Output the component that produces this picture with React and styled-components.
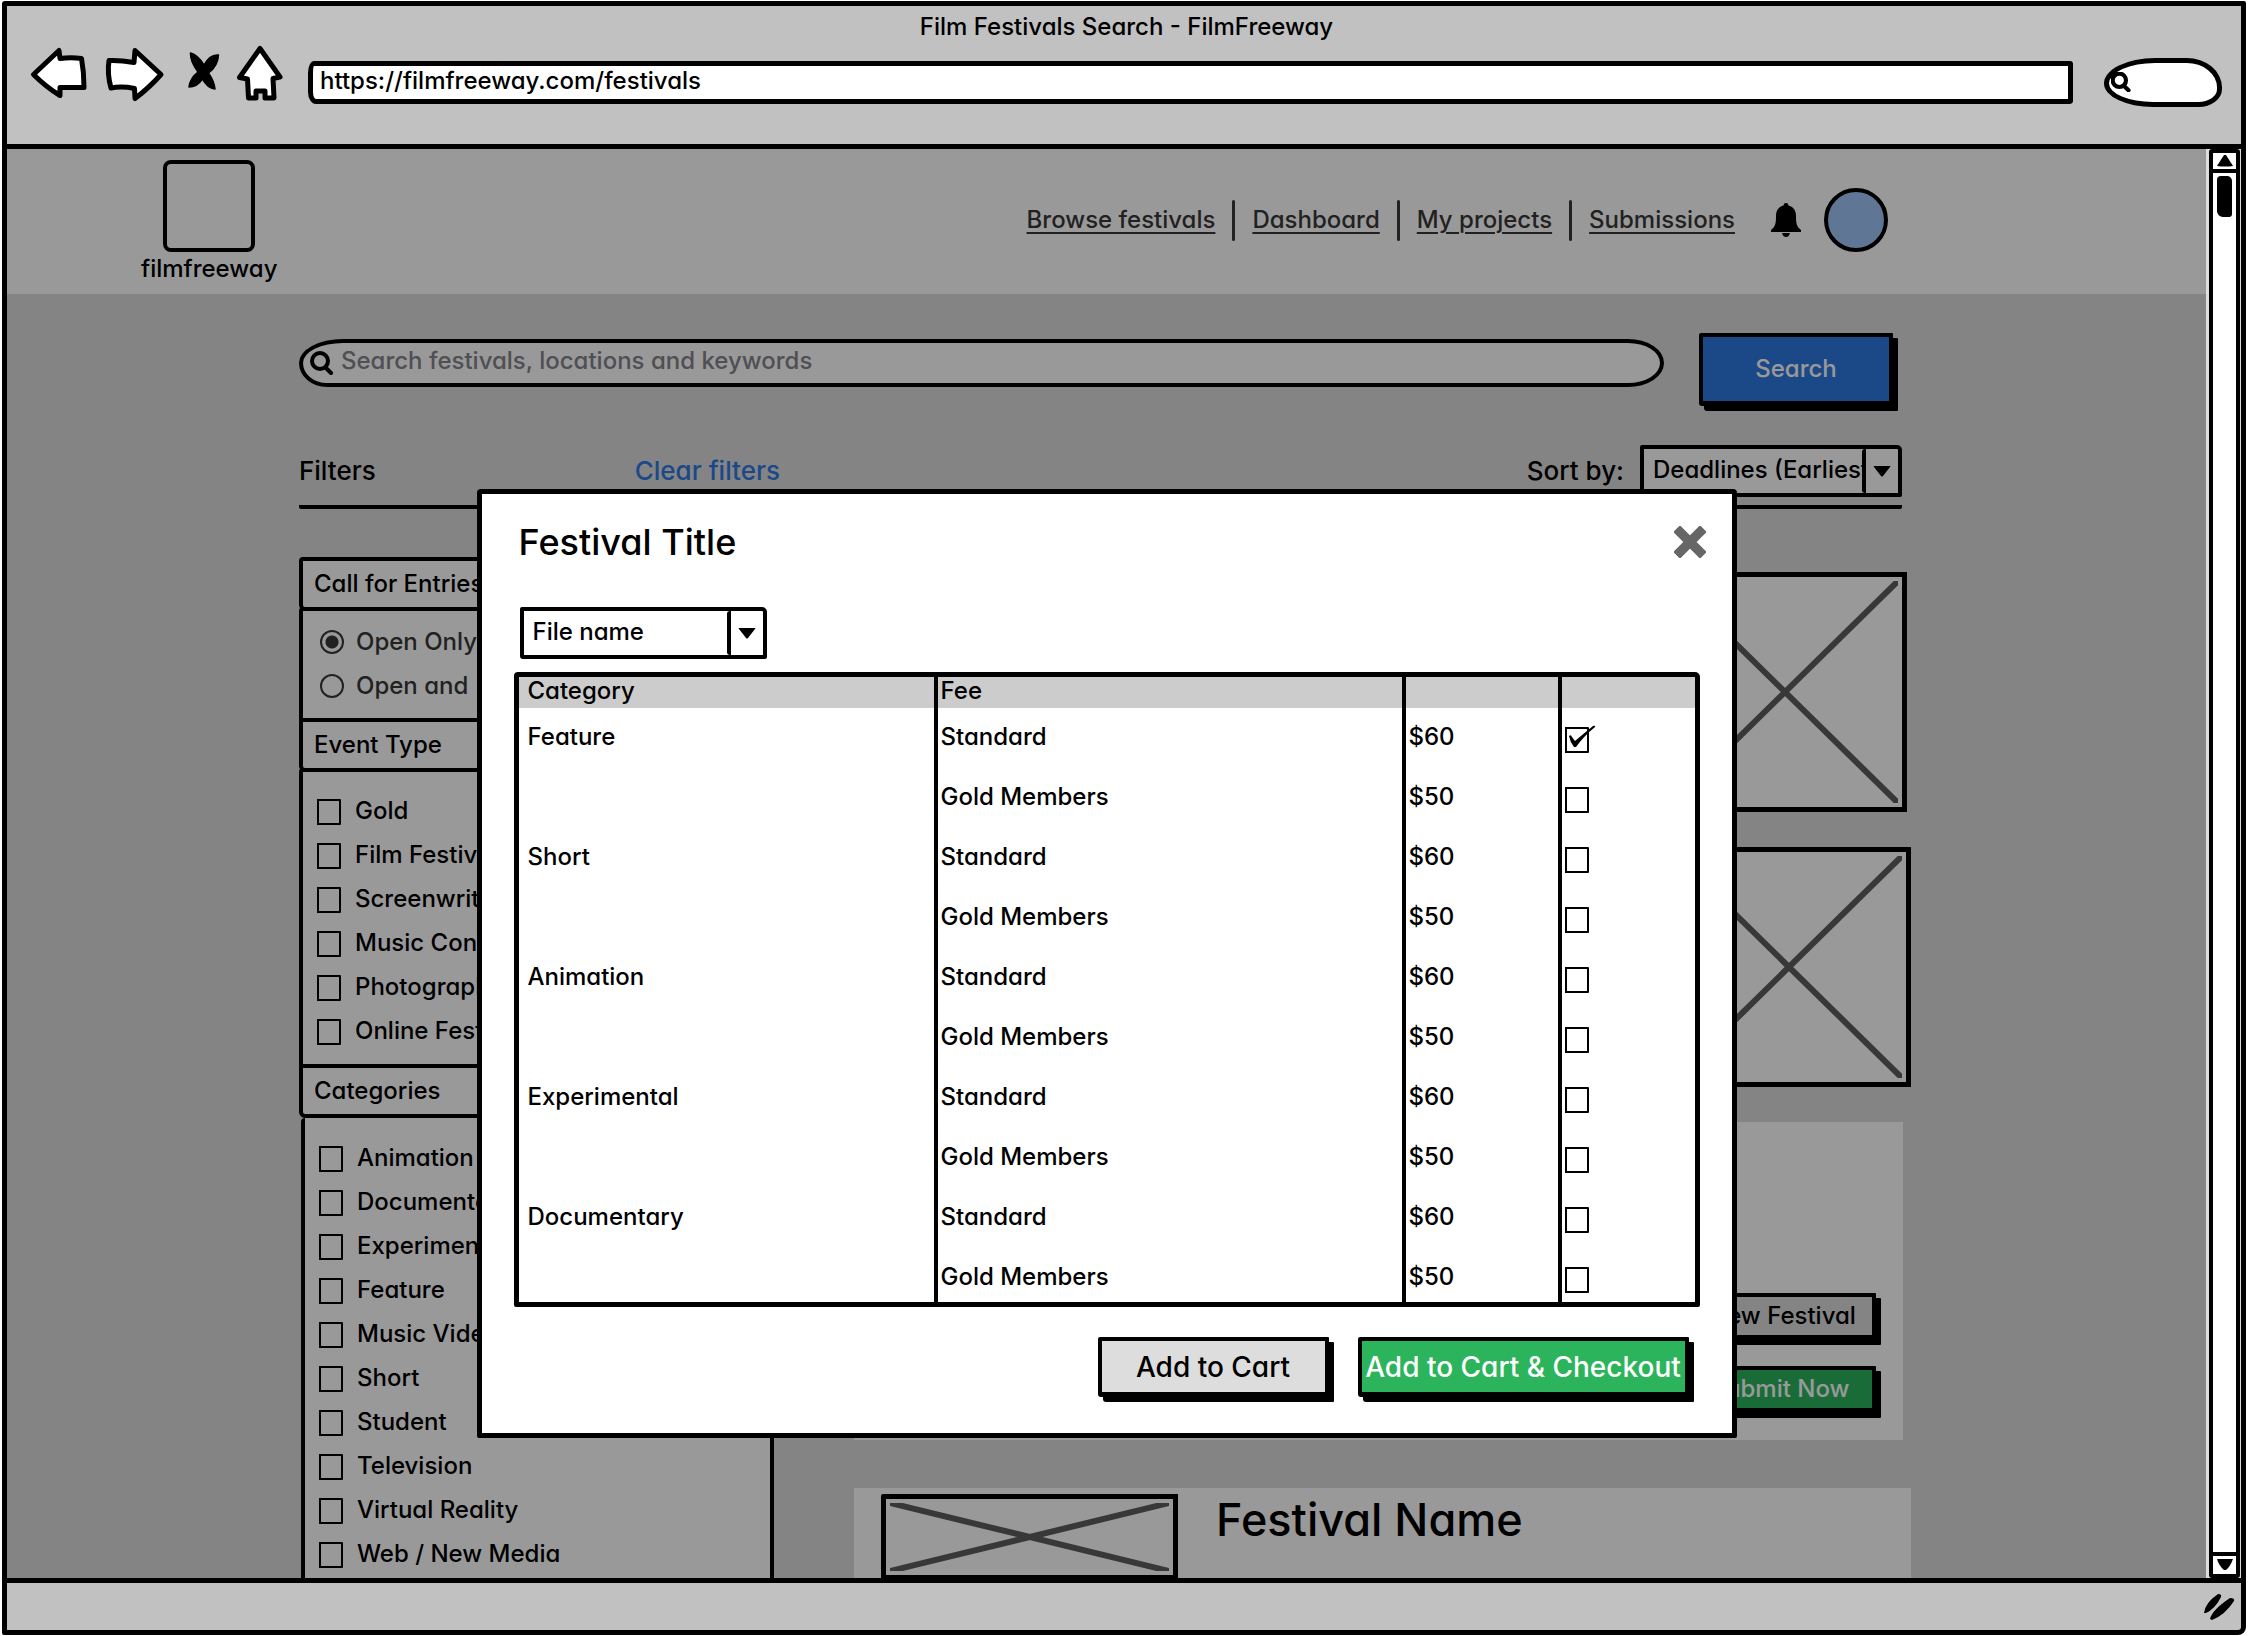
import React from "react";
import styled, { createGlobalStyle, css } from "styled-components";

const ink = "#000";
const chrome = "#c1c1c1";
const blue = "#2e78e2";
const green = "#2bb45c";

const GlobalStyle = createGlobalStyle`
  *, *::before, *::after { box-sizing: border-box; }
  body {
    margin: 0;
    background: #fff;
    color: ${ink};
    font: 500 24px/30px Inter, "Liberation Sans", sans-serif;
    font-feature-settings: "cv11";
  }
  button, input, select { font: inherit; font-feature-settings: inherit; color: inherit; }
`;

/* ---------- browser window ---------- */

const Window = styled.div`
  display: flex;
  flex-direction: column;
  height: calc(100vh - 2px);
  margin: 1px 2px;
  border: 5px solid ${ink};
  border-radius: 3px 2px 8px 2px;
  background: ${chrome};
  overflow: hidden;
`;

const WindowBar = styled.header`
  padding: 6px 19px 22px 24px;
  border-bottom: 5px solid ${ink};
`;

const WindowTitle = styled.div`
  text-align: center;
`;

const Toolbar = styled.div`
  display: flex;
  align-items: center;
  height: 80px;
`;

const ToolButton = styled.button`
  display: flex;
  flex: none;
  margin-right: 18px;
  padding: 0;
  border: 0;
  background: none;

  svg {
    display: block;
    overflow: visible;
    stroke: ${ink};
    stroke-width: 5;
    stroke-linejoin: round;
    stroke-linecap: round;
    fill: #fff;
  }
`;

const AddressInput = styled.input`
  flex: 1;
  min-width: 0;
  height: 43px;
  padding: 0 7px 3px;
  border: 5px solid ${ink};
  border-radius: 6px 3px 4px 8px / 12px 3px 3px 12px;
  background: #fff;
`;

const MiniSearch = styled.label`
  display: flex;
  flex: none;
  align-items: center;
  width: 118px;
  height: 49px;
  margin-left: 31px;
  padding-left: 2px;
  border: 5px solid ${ink};
  border-radius: 52px 36px 24px 50px / 26px 30px 18px 24px;
  background: #fff;

  svg { flex: none; }

  input {
    flex: 1;
    min-width: 0;
    border: 0;
    outline: 0;
    background: none;
  }
`;

const PageRow = styled.div`
  display: flex;
  flex: 1;
  min-height: 0;
  background: #ddd;
`;

const Viewport = styled.div`
  position: relative;
  flex: 1;
  min-width: 0;
  overflow: hidden;
  background: #ddd;
`;

const Scrollbar = styled.div`
  display: flex;
  flex: none;
  flex-direction: column;
  justify-content: space-between;
  width: 31px;
  margin: 0 1px 0 3px;
  border: 4px solid ${ink};
  border-radius: 3px;
  background: #fff;
`;

const ScrollEnd = styled.button`
  display: flex;
  align-items: center;
  justify-content: center;
  width: 100%;
  height: ${(p) => (p.$up ? 20 : 22)}px;
  padding: 0;
  border: 0 solid ${ink};
  border-width: ${(p) => (p.$up ? "0 0 4px" : "4px 0 0")};
  background: #fff;
`;

const ScrollThumb = styled.div`
  width: 15px;
  height: 41px;
  margin: 3px auto auto;
  border-radius: 4px 5px 3px 6px;
  background: ${ink};
`;

const StatusBar = styled.footer`
  display: flex;
  flex: none;
  align-items: center;
  justify-content: flex-end;
  height: 52px;
  padding-right: 4px;
  border-top: 5px solid ${ink};
`;

/* ---------- shared controls ---------- */

const Button = styled.button`
  flex: none;
  width: ${(p) => p.$width}px;
  height: ${(p) => p.$height}px;
  padding: 0;
  border: 4px solid ${ink};
  border-bottom-width: 5px;
  border-radius: 2px 1px 1px 3px;
  box-shadow: 5px 5px 0 ${ink};
  background: ${(p) => p.$fill || "#ddd"};
  color: ${(p) => (p.$fill ? "#fff" : ink)};
  font-size: ${(p) => (p.$large ? 28 : 24)}px;
  white-space: nowrap;
`;

const SelectFrame = styled.div`
  display: flex;
  width: ${(p) => p.$width}px;
  height: 52px;
  border: 4px solid ${ink};
  border-radius: 2px 5px 2px 3px;
  background: #fff;

  select {
    flex: 1;
    min-width: 0;
    padding: 0 0 3px 9px;
    border: 0;
    outline: 0;
    appearance: none;
    background: none;
    text-overflow: clip;
  }
`;

const SelectArrow = styled.span`
  display: flex;
  flex: none;
  align-items: center;
  justify-content: center;
  width: 36px;
  border-left: 4px solid ${ink};
  border-radius: 3px;
`;

const CheckBox = styled.span`
  position: relative;
  display: block;
  flex: none;
  width: 24px;
  height: 26px;

  input {
    display: block;
    width: 24px;
    height: 26px;
    margin: 0;
    appearance: none;
    border: 2px solid ${ink};
    border-radius: 0 1px 1px 0;
  }

  svg {
    position: absolute;
    top: 0;
    left: 0;
    overflow: visible;
    pointer-events: none;
  }
`;

const RadioInput = styled.input`
  flex: none;
  width: 24px;
  height: 24px;
  margin: 0;
  appearance: none;
  border: 2px solid #383838;
  border-radius: 50%;

  &:checked { background: radial-gradient(circle, #383838 0 6px, transparent 7px); }
`;

/* ---------- site header ---------- */

const SiteHeader = styled.header`
  display: flex;
  justify-content: space-between;
  align-items: flex-start;
  height: 145px;
  padding: 11px 318px 0 134px;
  background: #fff;
`;

const Brand = styled.a`
  display: flex;
  flex-direction: column;
  align-items: center;
  gap: 2px;
  color: inherit;
  text-decoration: none;
`;

const BrandMark = styled.span`
  width: 92px;
  height: 92px;
  border: 4px solid ${ink};
  border-radius: 8px;
`;

const SiteNav = styled.nav`
  display: flex;
  align-items: center;
  height: 120px;

  svg { margin: 0 23px 0 36px; }
`;

const NavLink = styled.a`
  color: #383838;
  text-decoration: underline;
  text-decoration-thickness: 2px;
  text-underline-offset: 4px;
`;

const NavRule = styled.span`
  width: 3px;
  height: 41px;
  margin: 0 17px;
  border-radius: 2px;
  background: #383838;
`;

const Avatar = styled.span`
  width: 64px;
  height: 64px;
  border: 4px solid ${ink};
  border-radius: 50%;
  background: #9fc5f8;
`;

/* ---------- search page ---------- */

const Main = styled.main`
  padding: 39px 304px 0 292px;
`;

const SearchRow = styled.form`
  display: flex;
  align-items: flex-start;
  gap: 35px;
  padding-right: 9px;
`;

const SearchField = styled.label`
  display: flex;
  flex: 1;
  align-items: center;
  gap: 7px;
  height: 48px;
  margin-top: 6px;
  padding: 0 7px;
  border: 4px solid ${ink};
  border-radius: 44px 36px 36px 28px / 24px;
  background: #fff;

  input {
    flex: 1;
    min-width: 0;
    padding: 0 0 4px;
    border: 0;
    outline: 0;
    background: none;
  }

  input::placeholder { color: #84848c; opacity: 1; }
`;

const FilterBar = styled.div`
  display: flex;
  justify-content: space-between;
  align-items: center;
  margin-top: 39px;
  padding-bottom: 8px;
  border-bottom: 4px solid ${ink};
  border-radius: 2px;
`;

const FilterHeading = styled.div`
  display: flex;
  justify-content: space-between;
  width: 481px;
  font-size: 26px;
`;

const ClearLink = styled.a`
  color: ${blue};
  text-decoration: none;
`;

const SortBy = styled.div`
  display: flex;
  align-items: center;
  gap: 16px;

  label { font-size: 26px; }
`;

const Columns = styled.div`
  display: flex;
  margin-top: 48px;
`;

const Filters = styled.aside`
  flex: none;
  width: 475px;
`;

const FilterTitle = styled.h2`
  margin: 0;
  padding: 8px 11px;
  border: 4px solid ${ink};
  border-radius: 4px 2px 2px 6px;
  background: #fff;
  font-size: 24px;
  font-weight: 500;
`;

const bodyPadding = {
  radios: "9px 17px 10px",
  types: "17px 14px 11px",
  categories: "18px 14px 2px",
};

const FilterBody = styled.div`
  margin: -4px 0;
  padding: ${(p) => bodyPadding[p.$kind]};
  border: 4px solid ${ink};
  border-radius: 4px 2px 2px 3px;
  background: #fff;

  ${(p) =>
    p.$kind === "categories" &&
    css`
      margin: 0 0 0 2px;
      border-top: 0;
    `}
`;

const Option = styled.label`
  display: flex;
  align-items: center;
  gap: ${(p) => (p.$muted ? 12 : 14)}px;
  height: 44px;
  color: ${(p) => (p.$muted ? "#383838" : ink)};

  ${CheckBox} { margin-top: 2px; }
`;

const Results = styled.section`
  display: flex;
  flex: 1;
  flex-direction: column;
  gap: 35px;
  margin: 15px -9px 0 80px;
`;

const Thumb = styled.div`
  display: flex;
  flex: none;
  align-self: flex-end;
  width: ${(p) => p.$width}px;
  height: ${(p) => p.$height}px;
  margin-right: ${(p) => p.$inset || 0}px;
  border: 5px solid ${ink};
  border-radius: 2px 0 0 2px;
  background: #fff;

  svg {
    flex: 1;
    width: 100%;
    height: 100%;
    padding: 4px;
    stroke: #5e5e5e;
  }
`;

const ResultCard = styled.article`
  display: flex;
  background: #fff;
`;

const ActionsCard = styled(ResultCard)`
  flex-direction: column;
  justify-content: flex-end;
  align-items: flex-end;
  gap: 26px;
  height: 318px;
  margin-right: 8px;
  padding: 0 27px 27px;
`;

const PreviewCard = styled(ResultCard)`
  gap: 38px;
  margin-top: 13px;
  padding: 6px 27px 120px;

  ${Thumb} { align-self: flex-start; }
`;

const FestivalName = styled.h3`
  margin: 0;
  font-size: 45px;
  line-height: 52px;
  font-weight: 500;
`;

/* ---------- dialog ---------- */

const Backdrop = styled.div`
  position: absolute;
  inset: 0;
  display: flex;
  justify-content: center;
  align-items: flex-start;
  padding-top: 340px;
  background: rgba(0, 0, 0, 0.4);
`;

const Dialog = styled.section`
  width: 1260px;
  padding: 26px 26px 36px;
  border: 5px solid ${ink};
  border-radius: 4px 4px 2px 2px;
  background: #fff;
`;

const DialogHead = styled.div`
  display: flex;
  justify-content: space-between;
  align-items: center;
  padding-left: 11px;
`;

const DialogTitle = styled.h1`
  margin: 0;
  font-size: 36px;
  line-height: 44px;
  font-weight: 500;
`;

const CloseButton = styled.button`
  display: flex;
  padding: 0;
  border: 0;
  background: none;
`;

const FileRow = styled.div`
  margin: 43px 12px 13px;
`;

const TableFrame = styled.div`
  margin: 0 6px;
  border: 5px solid ${ink};
  border-radius: 4px 5px 2px 2px;
`;

const FeeTable = styled.table`
  width: 100%;
  table-layout: fixed;
  border-collapse: separate;
  border-spacing: 0;

  th, td {
    height: 60px;
    padding: 14px 4px 0 3px;
    border-right: 4px solid ${ink};
    font-weight: 500;
    text-align: left;
    vertical-align: top;
  }
  th {
    height: 31px;
    padding-top: 0;
    background: #ccc;
    line-height: 28px;
  }
  th:first-child, td:first-child { padding-left: 9px; }
  th:last-child, td:last-child { border-right: 0; }
  td:last-child { padding-top: 19px; }
  tbody tr:last-child td { height: 54px; }
`;

const DialogActions = styled.div`
  display: flex;
  justify-content: flex-end;
  gap: 29px;
  margin-top: 30px;
  padding-right: 17px;
`;

/* ---------- drawings ---------- */

const SearchIcon = ({ size, weight }) => (
  <svg width={size} height={size} viewBox="0 0 24 24" fill="none" stroke="#000" strokeWidth={weight} strokeLinecap="round" aria-hidden="true">
    <circle cx="10" cy="10" r="8" />
    <path d="M16 17l5 5" />
  </svg>
);

const Triangle = ({ up }) => (
  <svg width="18" height="12" viewBox="0 0 18 12" aria-hidden="true">
    <path d={up ? "M8 0h2l7 11q-8 1-16 0z" : "M1 0h16q-3 8-7 11h-2Q3 7 1 0z"} />
  </svg>
);

const Cross = () => (
  <svg viewBox="0 0 100 100" preserveAspectRatio="none" aria-hidden="true">
    <path d="M0 0L100 100M100 0L0 100" strokeWidth="6" fill="none" vectorEffect="non-scaling-stroke" />
  </svg>
);

const Bell = () => (
  <svg width="30" height="34" viewBox="0 0 30 34" aria-hidden="true">
    <path d="M15 0c2 0 2 1 2.500 2.500C23 4 25 8 25 13c0 8 1 11 5 14v2H0v-2c4-3 5-6 5-14 0-5 2-9 7.500-10.500C13 1 13 0 15 0z" />
    <path d="M11 30h8q-1 4-4 4t-4-4z" />
  </svg>
);

/* ---------- composed parts ---------- */

function Check({ label, ...props }) {
  return (
    <CheckBox>
      <input type="checkbox" aria-label={label} {...props} />
      {props.defaultChecked && (
        <svg width="24" height="26" viewBox="0 0 24 26" aria-hidden="true">
          <path d="M4 9q2-2 3 1l3 4Q17 8 28-1q3-1 2 1Q19 9 11 20l-2 0Q5 15 4 9z" />
        </svg>
      )}
    </CheckBox>
  );
}

function Dropdown({ id, width, value, label }) {
  return (
    <SelectFrame $width={width}>
      <select id={id} defaultValue={value} aria-label={label}>
        <option>{value}</option>
      </select>
      <SelectArrow>
        <svg width="18" height="11" viewBox="0 0 18 11" aria-hidden="true">
          <path d="M1 0h16q1 0 0 1L10 10q-1 1-2 0L1 1Q0 0 1 0z" />
        </svg>
      </SelectArrow>
    </SelectFrame>
  );
}

function CheckList({ items }) {
  return items.map((item) => (
    <Option key={item}>
      <Check />
      {item}
    </Option>
  ));
}

const links = ["Browse festivals", "Dashboard", "My projects", "Submissions"];
const eventTypes = ["Gold", "Film Festival", "Screenwriting", "Music Contest", "Photography", "Online Festival"];
const categories = [
  "Animation", "Documentary", "Experimental", "Feature", "Music Video",
  "Short", "Student", "Television", "Virtual Reality", "Web / New Media",
];
const fees = ["Feature", "Short", "Animation", "Experimental", "Documentary"].flatMap((category) => [
  { category, label: category, tier: "Standard", price: "$60" },
  { category, label: "", tier: "Gold Members", price: "$50" },
]);

function FestivalDialog() {
  return (
    <Backdrop>
      <Dialog role="dialog" aria-labelledby="dialog-title">
        <DialogHead>
          <DialogTitle id="dialog-title">Festival Title</DialogTitle>
          <CloseButton type="button" aria-label="Close">
            <svg width="32" height="32" viewBox="0 0 32 32" aria-hidden="true">
              <path d="M6 6L26 26M26 6L6 26" stroke="#666" strokeWidth="9.500" strokeLinecap="square" strokeLinejoin="round" />
            </svg>
          </CloseButton>
        </DialogHead>
        <FileRow>
          <Dropdown width={247} value="File name" label="File" />
        </FileRow>
        <TableFrame>
          <FeeTable>
            <colgroup>
              <col width="419" />
              <col width="468" />
              <col width="156" />
              <col />
            </colgroup>
            <thead>
              <tr>
                <th scope="col">Category</th>
                <th scope="col">Fee</th>
                <th />
                <th />
              </tr>
            </thead>
            <tbody>
              {fees.map((fee, i) => (
                <tr key={fee.category + fee.tier}>
                  <td>{fee.label}</td>
                  <td>{fee.tier}</td>
                  <td>{fee.price}</td>
                  <td>
                    <Check label={`${fee.category}, ${fee.tier}`} defaultChecked={i === 0} />
                  </td>
                </tr>
              ))}
            </tbody>
          </FeeTable>
        </TableFrame>
        <DialogActions>
          <Button type="button" $width={231} $height={60} $large>Add to Cart</Button>
          <Button type="button" $width={331} $height={60} $large $fill={green}>Add to Cart &amp; Checkout</Button>
        </DialogActions>
      </Dialog>
    </Backdrop>
  );
}

function BrowserBar() {
  return (
    <WindowBar>
      <WindowTitle>Film Festivals Search - FilmFreeway</WindowTitle>
      <Toolbar>
        <ToolButton type="button" aria-label="Back">
          <svg width="56" height="80" viewBox="31 42 56 80">
            <path d="M33.500 74.500L59 50.500L60 58.500Q71 57 81.500 58.500Q84 72 84 87.500L60 87.500L60 95.500Q46 87 33.500 74.500z" />
          </svg>
        </ToolButton>
        <ToolButton type="button" aria-label="Forward">
          <svg width="60" height="80" viewBox="105 42 60 80">
            <path d="M109 60.500Q120 60 134 62.500L135 50.500L161 74.500Q149 88 135 98.500L134.500 88.500Q122 86 111 88Q107 74 109 60.500z" />
          </svg>
        </ToolButton>
        <ToolButton type="button" aria-label="Stop">
          <svg width="36" height="80" viewBox="183 42 36 80">
            <path d="M190.500 53Q198 55 204 65Q210 54 218.500 55Q218 66 208.500 73Q214 81 215 89Q207 88 202.500 79Q197 87 189 87Q190 78 198 72Q190 61 190.500 53z" fill="#000" strokeWidth="1.500" />
          </svg>
        </ToolButton>
        <ToolButton type="button" aria-label="Home">
          <svg width="53" height="80" viewBox="237 42 53 80">
            <path d="M260 48.500L280 77L273 78.500L274 98H265V91H256V98H248.500L247.500 79L239.500 77.500z" />
          </svg>
        </ToolButton>
        <AddressInput aria-label="Address" defaultValue="https://filmfreeway.com/festivals" />
        <MiniSearch>
          <SearchIcon size={20} weight={5} />
          <input aria-label="Web search" />
        </MiniSearch>
      </Toolbar>
    </WindowBar>
  );
}

export default function App() {
  return (
    <>
      <GlobalStyle />
      <Window>
        <BrowserBar />
        <PageRow>
          <Viewport>
            <SiteHeader>
              <Brand href="#">
                <BrandMark />
                filmfreeway
              </Brand>
              <SiteNav>
                {links.map((link, i) => (
                  <React.Fragment key={link}>
                    {i > 0 && <NavRule />}
                    <NavLink href="#">{link}</NavLink>
                  </React.Fragment>
                ))}
                <Bell />
                <Avatar />
              </SiteNav>
            </SiteHeader>

            <Main>
              <SearchRow onSubmit={(e) => e.preventDefault()}>
                <SearchField>
                  <SearchIcon size={24} weight={4} />
                  <input aria-label="Search festivals" placeholder="Search festivals, locations and keywords" />
                </SearchField>
                <Button type="submit" $width={194} $height={73} $fill={blue}>Search</Button>
              </SearchRow>

              <FilterBar>
                <FilterHeading>
                  <span>Filters</span>
                  <ClearLink href="#">Clear filters</ClearLink>
                </FilterHeading>
                <SortBy>
                  <label htmlFor="sort">Sort by:</label>
                  <Dropdown id="sort" width={262} value="Deadlines (Earliest)" />
                </SortBy>
              </FilterBar>

              <Columns>
                <Filters>
                  <FilterTitle>Call for Entries</FilterTitle>
                  <FilterBody $kind="radios">
                    <Option $muted>
                      <RadioInput type="radio" name="open" defaultChecked />
                      Open Only
                    </Option>
                    <Option $muted>
                      <RadioInput type="radio" name="open" />
                      Open and
                    </Option>
                  </FilterBody>
                  <FilterTitle>Event Type</FilterTitle>
                  <FilterBody $kind="types">
                    <CheckList items={eventTypes} />
                  </FilterBody>
                  <FilterTitle>Categories</FilterTitle>
                  <FilterBody $kind="categories">
                    <CheckList items={categories} />
                  </FilterBody>
                </Filters>

                <Results>
                  <Thumb $width={244} $height={240} $inset={4}><Cross /></Thumb>
                  <Thumb $width={244} $height={240}><Cross /></Thumb>
                  <ActionsCard>
                    <Button type="button" $width={192} $height={47}>View Festival</Button>
                    <Button type="button" $width={192} $height={47} $fill={green}>Submit Now</Button>
                  </ActionsCard>
                  <PreviewCard>
                    <Thumb $width={297} $height={86}><Cross /></Thumb>
                    <FestivalName>Festival Name</FestivalName>
                  </PreviewCard>
                </Results>
              </Columns>
            </Main>

            <FestivalDialog />
          </Viewport>
          <Scrollbar>
            <ScrollEnd type="button" aria-label="Scroll up" $up><Triangle up /></ScrollEnd>
            <ScrollThumb />
            <ScrollEnd type="button" aria-label="Scroll down"><Triangle /></ScrollEnd>
          </Scrollbar>
        </PageRow>
        <StatusBar>
          <svg width="34" height="28" viewBox="0 0 34 28" aria-hidden="true">
            <path d="M1 20Q2 10 15 1q4 0 3 3Q12 16 3 20zM7 26Q9 17 27 5q5 0 4 3Q22 22 9 27z" />
          </svg>
        </StatusBar>
      </Window>
    </>
  );
}
